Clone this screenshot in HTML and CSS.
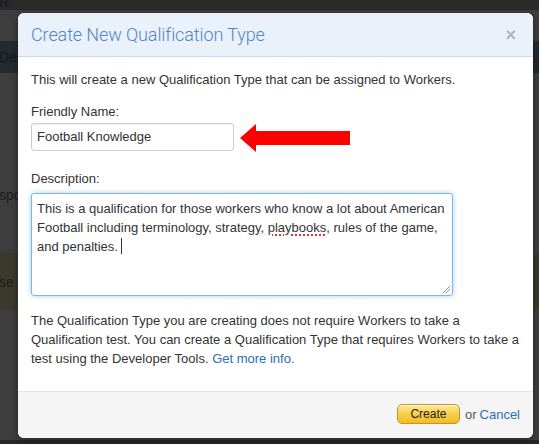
FILE: index.html
```html
<!DOCTYPE html>
<html>
<head>
<meta charset="utf-8">
<link rel="stylesheet" href="styles.css">
</head>
<body>
<div class="page">
  <div class="bg-top"><span class="bg-r">R</span></div>
  <div class="bg-gray bg-g1"></div>
  <div class="bg-dev"><span class="bg-text">Dev</span></div>
  <div class="bg-gray bg-g2"><span class="bg-text">spo</span></div>
  <div class="bg-olive"><span class="bg-text">se</span></div>
  <div class="bg-gray bg-g3"></div>
  <div class="bg-bottom"></div>

  <div class="modal">
    <div class="modal-header">
      <h3 class="modal-title">Create New Qualification Type</h3>
      <span class="close">×</span>
    </div>
    <div class="modal-body">
      <p class="intro">This will create a new Qualification Type that can be assigned to Workers.</p>
      <label class="label">Friendly Name:</label>
      <div class="name-row">
        <div class="input">Football Knowledge</div>
        <svg class="arrow" width="111" height="29" viewBox="0 0 111 29">
          <polygon points="0,14 16,0 16,7 110,7 110,21 16,21 16,28" fill="#ff0000"/>
        </svg>
      </div>
      <label class="label label-desc">Description:</label>
      <div class="textarea">This is a qualification for those workers who know a lot about American Football including terminology, strategy, <span class="spell">playbooks</span>, rules of the game, and penalties.<span class="caret"></span>
        <svg class="grip" width="8" height="8" viewBox="0 0 8 8"><path d="M1 8 L8 1 M4 8 L8 4" stroke="#999" stroke-width="1"/></svg>
      </div>
      <p class="note">The Qualification Type you are creating does not require Workers to take a Qualification test. You can create a Qualification Type that requires Workers to take a test using the Developer Tools. <a class="link" href="#">Get more info.</a></p>
    </div>
    <div class="modal-footer">
      <button class="btn-create">Create</button>
      <span class="or">or</span>
      <a class="link" href="#">Cancel</a>
    </div>
  </div>
</div>
</body>
</html>
```
FILE: styles.css
```css
* { box-sizing: border-box; }
html, body { margin: 0; padding: 0; }
body {
  width: 539px;
  height: 444px;
  overflow: hidden;
  background: #3c3c3c;
  font-family: "Liberation Sans", Arial, sans-serif;
}
.page {
  position: relative;
  width: 539px;
  height: 444px;
  display: flex;
  flex-direction: column;
}
.bg-top { height: 10px; background: #2a2a2a; position: relative; overflow: hidden; }
.bg-r { position: absolute; left: -1px; top: -6px; color: #1a1f25; font-weight: bold; font-size: 14px; }
.bg-gray { background: #3d3d3d; position: relative; }
.bg-g1 { height: 31px; }
.bg-dev { height: 32px; background: #232a31; position: relative; }
.bg-g2 { height: 180px; }
.bg-olive { height: 57px; background: #3a392c; position: relative; }
.bg-g3 { flex: 1; }
.bg-bottom { height: 4px; background: #262626; }
.bg-text { position: absolute; left: -1px; color: #1c1c1c; font-size: 14px; }
.bg-dev .bg-text { top: 8px; color: #15191d; }
.bg-g2 .bg-text { top: 114px; }
.bg-olive .bg-text { top: 21px; color: #1d1c15; }

.modal {
  position: absolute;
  left: 18px;
  top: 13px;
  width: 515px;
  height: 425px;
  background: #fff;
  border-radius: 6px;
  overflow: hidden;
  display: flex;
  flex-direction: column;
  box-shadow: 0 2px 6px rgba(0,0,0,0.4);
}
.modal-header {
  height: 44px;
  background: #eaf1fb;
  border-bottom: 1px solid #c9dcf0;
  display: flex;
  align-items: center;
  justify-content: space-between;
  padding: 0 17px 0 13px;
}
.modal-title {
  margin: 0;
  font-family: Roboto, "Liberation Sans", sans-serif;
  font-weight: 300;
  font-size: 18px;
  color: #4f86c6;
  letter-spacing: -0.1px;
}
.close {
  font-family: "Liberation Sans", Arial, sans-serif;
  font-weight: bold;
  font-size: 18px;
  color: #b0b4b8;
  line-height: 1;
  margin-top: 1px;
}
.modal-body {
  flex: 1;
  padding: 13px 13px 0 13px;
  font-size: 13px;
  line-height: 19px;
  color: #333;
}
.intro { margin: 0 0 13px 0; }
.label { display: block; margin: 0 0 2px 0; }
.label-desc { margin: 18px 0 5px 0; }
.name-row { display: flex; align-items: flex-start; gap: 6px; height: 28px; }
.input {
  width: 203px;
  height: 28px;
  border: 1px solid #ccc;
  border-radius: 3px;
  padding: 4px 5px;
  font-size: 13px;
  line-height: 18px;
  color: #333;
  box-shadow: inset 0 1px 1px rgba(0,0,0,0.05);
}
.arrow { display: block; margin-top: 1px; flex: none; }
.textarea {
  position: relative;
  width: 422px;
  height: 103px;
  border: 1px solid #80b5ea;
  border-radius: 3px;
  padding: 5px 5px;
  font-size: 13px;
  line-height: 19px;
  color: #333;
  box-shadow: 0 0 5px rgba(82,168,236,0.55);
}
.spell {
  text-decoration: underline dotted #e03030;
  text-decoration-thickness: 2px;
  text-underline-offset: 2px;
}
.caret {
  display: inline-block;
  width: 1px;
  height: 16px;
  background: #333;
  margin-left: 3px;
  vertical-align: -3px;
}
.grip { position: absolute; right: 2px; bottom: 2px; }
.note { margin: 15px 0 0 0; }
.link { color: #2c6db5; text-decoration: none; }
.modal-footer {
  height: 47px;
  background: #f5f5f5;
  border-top: 1px solid #e5e5e5;
  display: flex;
  align-items: center;
  justify-content: flex-end;
  padding: 0 13px 2px 0;
  font-size: 13px;
  color: #555;
}
.btn-create {
  width: 63px;
  height: 20px;
  border: 1px solid #c0962a;
  border-radius: 5px;
  background: linear-gradient(#fde89a, #f8cf4a 50%, #f3bd23);
  font-family: "Liberation Sans", Arial, sans-serif;
  font-size: 12px;
  color: #222;
  padding: 0;
  margin-right: 5px;
  box-shadow: inset 0 1px 0 rgba(255,255,255,0.6);
}
.or { margin-right: 3px; color: #555; }
```
